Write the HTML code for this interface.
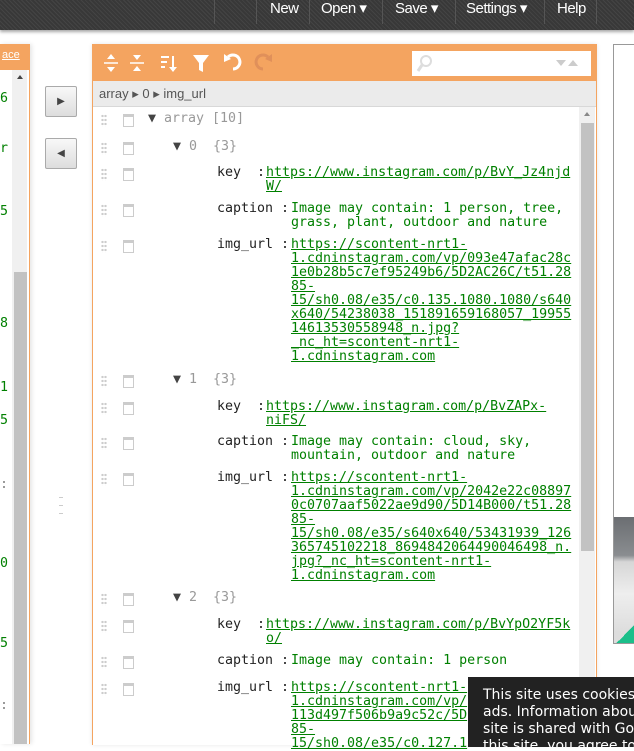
<!DOCTYPE html>
<html><head><style>
body{margin:0;width:634px;height:744px;overflow:hidden;background:#fff;font-family:"Liberation Sans",sans-serif;position:relative}
.top{position:absolute;left:0;top:0;width:634px;height:30px;background:#3c3c3c;background-image:repeating-linear-gradient(45deg,#444 0 1px,#383838 1px 3px);box-shadow:0 2px 3px rgba(0,0,0,.35)}
.top span{position:absolute;top:0;height:30px;line-height:18px;color:#fff;font-size:15px;letter-spacing:-.5px}
.sep{position:absolute;top:0;width:1px;height:24px;background:#555}
.mono{font-family:"DejaVu Sans Mono","Liberation Mono",monospace;font-size:13.3px;line-height:14px}
.h{position:absolute;left:101px;width:6px;height:13px;background:radial-gradient(circle,#ccc 1.1px,transparent 1.3px) 0 0/3px 4px}
.c{position:absolute;left:123px;width:9px;height:9px;border:1px solid #ccc;border-top-width:3px}
.t{position:absolute;color:#222}
.g{color:#999}
a{color:#008000;text-decoration:underline}
.v{position:absolute;color:#008000}
</style></head><body>
<div class="top">
<div class="sep" style="left:214px"></div><div class="sep" style="left:256px"></div>
<span style="left:270px">New</span><div class="sep" style="left:309px"></div>
<span style="left:321px">Open ▾</span><div class="sep" style="left:382px"></div>
<span style="left:395px">Save ▾</span><div class="sep" style="left:455px"></div>
<span style="left:466px">Settings ▾</span><div class="sep" style="left:544px"></div>
<span style="left:557px">Help</span><div class="sep" style="left:596px"></div>
</div>

<div style="position:absolute;left:0;top:44px;width:29px;height:700px;border-right:1px solid #f4a460;box-shadow:2px 0 4px rgba(0,0,0,.1)">
<div style="height:26px;background:#f4a460;color:#fff;font-size:11px;text-decoration:underline;line-height:22px;padding-left:2px">ace</div>
<div style="position:absolute;left:12px;top:26px;width:15px;height:674px;background:#f0f0f0"></div>
<div style="position:absolute;left:17px;top:31px;width:0;height:0;border:3px solid transparent;border-bottom:4px solid #444;border-top:0"></div>
<div style="position:absolute;left:14px;top:228px;width:13px;height:472px;background:#c2c2c2"></div>
<div class="mono" style="position:absolute;left:0;top:0;color:#008000">
<div style="position:absolute;top:48px">6</div><div style="position:absolute;top:98px">r</div><div style="position:absolute;top:161px">5</div><div style="position:absolute;top:273px">8</div><div style="position:absolute;top:337px">1</div><div style="position:absolute;top:370px">5</div><div style="position:absolute;top:434px;color:#888">:</div><div style="position:absolute;top:513px">0</div><div style="position:absolute;top:593px">5</div><div style="position:absolute;top:655px;color:#888">:</div>
</div></div>

<div style="position:absolute;left:45px;top:86px;width:30px;height:29px;border:1px solid #aaa;border-radius:2px;background:linear-gradient(#f8f8f8,#ddd);text-align:center;line-height:29px;font-size:10px;color:#444">▶</div>
<div style="position:absolute;left:45px;top:138px;width:30px;height:29px;border:1px solid #aaa;border-radius:2px;background:linear-gradient(#f8f8f8,#ddd);text-align:center;line-height:29px;font-size:10px;color:#444">◀</div>
<div style="position:absolute;left:59px;top:497px;width:4px;height:1px;background:#ccc;box-shadow:0 8px #ccc,0 16px #ccc"></div>

<div style="position:absolute;left:92px;top:44px;width:503px;height:700px;border:1px solid #f4a460;border-bottom:0;overflow:hidden;box-shadow:0 0 4px rgba(0,0,0,.1)">
<div style="height:36px;background:#f4a460;position:relative">
<svg width="200" height="36" style="position:absolute;left:0;top:0" fill="#fff" stroke="#fff">
<g stroke-width="1.5"><line x1="11" y1="18" x2="25" y2="18"/><line x1="37" y1="18" x2="51" y2="18"/></g>
<path d="M14 14 l4-5 4 5z M14 22 l4 5 4-5z" stroke="none"/>
<path d="M40 10 l4 5 4-5z M40 26 l4-5 4 5z" stroke="none"/>
<g stroke-width="2"><line x1="68" y1="12" x2="76" y2="12"/><line x1="68" y1="17" x2="74" y2="17"/><line x1="68" y1="22" x2="72" y2="22"/><line x1="80" y1="11" x2="80" y2="26"/></g>
<path d="M76 22 l4 5 4-5z" stroke="none"/>
<path d="M100 10 h16 l-6 8 v9 l-4-2 v-7z" stroke="none"/>
<path d="M140 24 a7 7 0 1 0 -5-12" fill="none" stroke-width="3"/><path d="M131 9 l0 8 7-3z" stroke="none"/>
<path d="M170 24 a7 7 0 1 1 5-12" fill="none" stroke="#e0905a" stroke-width="3"/><path d="M179 9 l0 8 -7-3z" fill="#e0905a" stroke="none"/>
</svg>
<div style="position:absolute;left:319px;top:6px;width:179px;height:25px;background:#fff">
<svg width="179" height="25"><circle cx="14" cy="10" r="5" fill="none" stroke="#ddd" stroke-width="2"/><line x1="10" y1="14" x2="6" y2="20" stroke="#ddd" stroke-width="3"/><path d="M144 9h10l-5 6z M156 15h10l-5-6z" fill="#ccc"/></svg>
</div></div>
<div style="height:25px;background:#ebebeb;border-bottom:1px solid #d8d8d8;color:#555;font-size:13px;line-height:25px;padding-left:6px">array ▸ 0 ▸ img_url</div>
<div style="position:absolute;left:486px;top:62px;width:16px;height:640px;background:#f0f0f0"></div>
<div style="position:absolute;left:491px;top:67px;width:0;height:0;border:3px solid transparent;border-bottom:4px solid #888;border-top:0"></div>
<div style="position:absolute;left:488px;top:78px;width:13px;height:428px;background:#c2c2c2"></div>
</div>

<div class="mono" style="position:absolute;left:0;top:2px;width:634px">
<div class="h" style="top:112px"></div><div class="c" style="top:112px"></div><div class="t" style="left:148px;top:110px;color:#444">▼ <span class="g">array [10]</span></div>

<div class="h" style="top:140px"></div><div class="c" style="top:140px"></div><div class="t" style="left:173px;top:138px;color:#444">▼ <span class="g">0&nbsp;&nbsp;{3}</span></div>
<div class="h" style="top:166px"></div><div class="c" style="top:166px"></div><div class="t" style="left:217px;top:164px">key&nbsp;&nbsp;:</div><div class="v" style="left:266px;top:164px"><a>https://www.instagram.com/p/BvY_Jz4njd<br>W/</a></div>
<div class="h" style="top:202px"></div><div class="c" style="top:202px"></div><div class="t" style="left:217px;top:200px">caption :</div><div class="v" style="left:291px;top:200px">Image may contain: 1 person, tree,<br>grass, plant, outdoor and nature</div>
<div class="h" style="top:238px"></div><div class="c" style="top:238px"></div><div class="t" style="left:217px;top:236px">img_url :</div><div class="v" style="left:291px;top:236px"><a>https://scontent-nrt1-<br>1.cdninstagram.com/vp/093e47afac28c<br>1e0b28b5c7ef95249b6/5D2AC26C/t51.28<br>85-<br>15/sh0.08/e35/c0.135.1080.1080/s640<br>x640/54238038_151891659168057_19955<br>14613530558948_n.jpg?<br>_nc_ht=scontent-nrt1-<br>1.cdninstagram.com</a></div>

<div class="h" style="top:373px"></div><div class="c" style="top:373px"></div><div class="t" style="left:173px;top:371px;color:#444">▼ <span class="g">1&nbsp;&nbsp;{3}</span></div>
<div class="h" style="top:400px"></div><div class="c" style="top:400px"></div><div class="t" style="left:217px;top:398px">key&nbsp;&nbsp;:</div><div class="v" style="left:266px;top:398px"><a>https://www.instagram.com/p/BvZAPx-<br>niFS/</a></div>
<div class="h" style="top:435px"></div><div class="c" style="top:435px"></div><div class="t" style="left:217px;top:433px">caption :</div><div class="v" style="left:291px;top:433px">Image may contain: cloud, sky,<br>mountain, outdoor and nature</div>
<div class="h" style="top:471px"></div><div class="c" style="top:471px"></div><div class="t" style="left:217px;top:469px">img_url :</div><div class="v" style="left:291px;top:469px"><a>https://scontent-nrt1-<br>1.cdninstagram.com/vp/2042e22c08897<br>0c0707aaf5022ae9d90/5D14B000/t51.28<br>85-<br>15/sh0.08/e35/s640x640/53431939_126<br>365745102218_8694842064490046498_n.<br>jpg?_nc_ht=scontent-nrt1-<br>1.cdninstagram.com</a></div>

<div class="h" style="top:591px"></div><div class="c" style="top:591px"></div><div class="t" style="left:173px;top:589px;color:#444">▼ <span class="g">2&nbsp;&nbsp;{3}</span></div>
<div class="h" style="top:618px"></div><div class="c" style="top:618px"></div><div class="t" style="left:217px;top:616px">key&nbsp;&nbsp;:</div><div class="v" style="left:266px;top:616px"><a>https://www.instagram.com/p/BvYpO2YF5k<br>o/</a></div>
<div class="h" style="top:654px"></div><div class="c" style="top:654px"></div><div class="t" style="left:217px;top:652px">caption :</div><div class="v" style="left:291px;top:652px">Image may contain: 1 person</div>
<div class="h" style="top:681px"></div><div class="c" style="top:681px"></div><div class="t" style="left:217px;top:679px">img_url :</div><div class="v" style="left:291px;top:679px"><a>https://scontent-nrt1-<br>1.cdninstagram.com/vp/<br>113d497f506b9a9c52c/5D<br>85-<br>15/sh0.08/e35/c0.127.1</a></div>
</div>

<div style="position:absolute;left:613px;top:44px;width:21px;height:600px;border:1px solid #999;border-right:0;box-sizing:border-box;overflow:hidden">
<div style="position:absolute;left:20px;top:442px;width:3px;height:14px;background:#0a9"></div>
<div style="position:absolute;left:0;top:472px;width:21px;height:128px;background:linear-gradient(#6b6e72 0,#8a8d90 30%,#d6d6d6 35%,#eee 60%,#ddd 90%)"></div>
<div style="position:absolute;left:0;top:580px;width:21px;height:20px;background:linear-gradient(135deg,transparent 50%,#1bbf8a 50%)"></div>
</div>

<div style="position:absolute;left:468px;top:677px;width:170px;height:70px;background:#222;color:#fff;font-family:'DejaVu Sans',sans-serif;font-size:14px;line-height:17px;padding:10px 0 0 15px;box-sizing:border-box;white-space:nowrap;overflow:hidden">This site uses cookies f<br>ads. Information abou<br>site is shared with Goo<br>this site, you agree to</div>
</body></html>
